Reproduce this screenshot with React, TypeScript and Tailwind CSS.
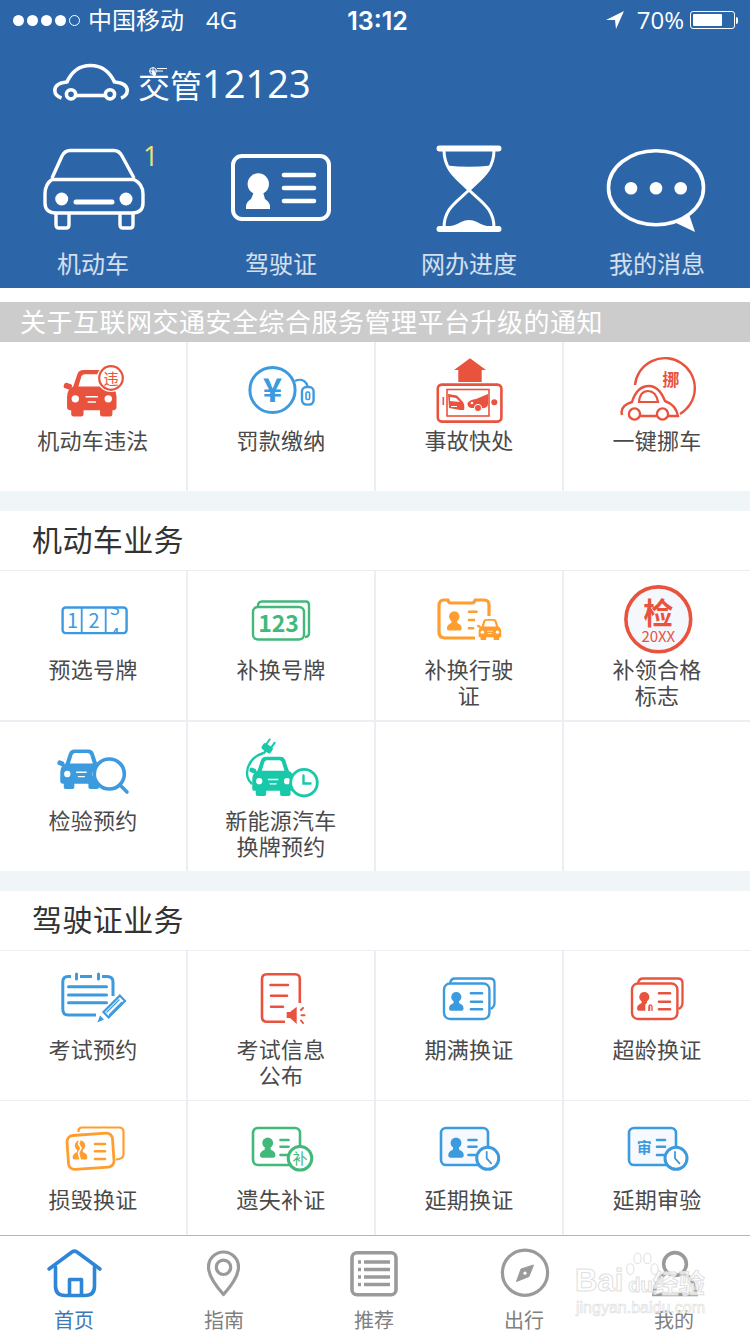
import React from "react";

const RED = "#e9533e";
const BLUE = "#3c9adf";
const GREEN = "#41b97a";
const ORANGE = "#ff9d2e";
const TEAL = "#18c9a9";
const GRAY = "#9a9a9a";

function Ic({ children }: { children: React.ReactNode }) {
  return (
    <svg viewBox="0 0 100 72" fill="none" className="w-[100px] h-[72px] block">
      {children}
    </svg>
  );
}

function CarFill({ x, y, s, c, sy }: { x: number; y: number; s: number; c: string; sy?: number }) {
  return (
    <g transform={`translate(${x} ${y}) scale(${s} ${sy ?? s})`}>
      <path fill={c} d="M8 17 L12 5 Q13.5 1 18 1 H34 Q38.5 1 40 5 L44 17 Q50 20 50 27 V37 Q50 40 47 40 H46 V44 Q46 46 44 46 H36 Q34 46 34 44 V40 H18 V44 Q18 46 16 46 H8 Q6 46 6 44 V40 H5 Q2 40 2 37 V27 Q2 20 8 17 Z" />
      <rect x="-1" y="14" width="8" height="5.5" rx="2.4" fill={c} transform="rotate(20 3 16)" />
      <path fill="#fff" d="M13 17 L16 7 Q17 5 19 5 H33 Q35 5 36 7 L39 17 Z" />
      <circle cx="10" cy="29" r="3.6" fill="#fff" />
      <circle cx="42" cy="29" r="3.6" fill="#fff" />
      <path stroke="#fff" strokeWidth="1.5" d="M20 27 H32 M22 32 H30" />
    </g>
  );
}

function Person({ x, y, s, c }: { x: number; y: number; s: number; c: string }) {
  return (
    <g transform={`translate(${x} ${y}) scale(${s})`} fill={c}>
      <circle cx="0" cy="0" r="5.2" />
      <path d="M-2.6 4 H2.6 L3 6.5 Q7.4 8 7.4 12 Q7.4 14 5.4 14 H-5.4 Q-7.4 14 -7.4 12 Q-7.4 8 -3 6.5 Z" />
    </g>
  );
}

function Lines({ x1, x2, ys, c, w = 2.6 }: { x1: number; x2: number; ys: number[]; c: string; w?: number }) {
  return (
    <g stroke={c} strokeWidth={w} strokeLinecap="round">
      {ys.map((y) => (
        <line key={y} x1={x1} x2={x2} y1={y} y2={y} />
      ))}
    </g>
  );
}

function Clock({ x, y, c }: { x: number; y: number; c: string }) {
  return (
    <g>
      <circle cx={x} cy={y} r="11" fill="#fff" stroke={c} strokeWidth="3" />
      <path d={`M${x - 1} ${y - 6.5} V${y} L${x + 3.5} ${y + 5}`} stroke={c} strokeWidth="1.8" strokeLinecap="round" />
    </g>
  );
}

const IconViolation = () => (
  <Ic>
    <CarFill x={22} y={13} s={1.03} c={RED} />
    <circle cx="68" cy="22" r="14" fill="#fff" />
    <circle cx="68" cy="22" r="11.8" fill="#fff" stroke={RED} strokeWidth="2.2" />
    <text x="68" y="27.5" textAnchor="middle" fontSize="15" fill={RED}>违</text>
  </Ic>
);

const IconFine = () => (
  <Ic>
    <circle cx="41.5" cy="34" r="22.6" stroke={BLUE} strokeWidth="3" />
    <text x="41.5" y="46" textAnchor="middle" fontSize="33" fontWeight="700" fill={BLUE}>¥</text>
    <path d="M64 25 Q69 22.5 73 25 Q76 27 76.5 30.5" stroke={BLUE} strokeWidth="2.2" />
    <rect x="71" y="31" width="11.6" height="17.6" rx="4.5" stroke={BLUE} strokeWidth="2.4" />
    <rect x="75" y="36" width="3.6" height="7.5" rx="1.4" stroke={BLUE} strokeWidth="1.6" />
  </Ic>
);

const IconAccident = () => (
  <Ic>
    <path fill={RED} d="M51 2.3 L35 14 H39.3 V26 H62.7 V14 H67 Z" />
    <rect x="18.8" y="28.6" width="63.6" height="37" rx="4" stroke={RED} strokeWidth="2.6" />
    <rect x="28" y="33.5" width="42" height="26.5" stroke={RED} strokeWidth="1.6" />
    <path d="M24.3 41 V49" stroke={RED} strokeWidth="1.6" />
    <circle cx="75.3" cy="46.3" r="3" fill={RED} />
    <path fill={RED} d="M29 38 L38 39.5 L44 46 Q46 49 45 54 L41 54 L30 52 Z" />
    <path fill="#fff" d="M31 41 L37 42 L41 46 L31 45 Z M32 50 H38 V51 H32 Z" />
    <path fill={RED} d="M48.5 47 Q51 43.5 57 43 L69 38 V48 Q69 51 65 52 H52 Q48 51 48.5 47 Z" />
    <circle cx="59" cy="52" r="3.6" fill={RED} stroke="#fff" strokeWidth="1" />
    <circle cx="53" cy="47" r="1.3" fill="#fff" />
  </Ic>
);

const IconMove = () => (
  <Ic>
    <path d="M28 29 A30 30 0 1 1 73 58" stroke={RED} strokeWidth="2.4" />
    <path d="M15 59 L14.5 56 Q15 49 25 46 Q30 30 42 30 Q52 30 58 45 Q69 49 71 60 H61 M49.5 60 H33.5" stroke={RED} strokeWidth="2.4" fill="#fff" />
    <circle cx="27.5" cy="58" r="5.6" fill="#fff" stroke={RED} strokeWidth="2.4" />
    <circle cx="55.5" cy="58" r="5.6" fill="#fff" stroke={RED} strokeWidth="2.4" />
    <path d="M32 46 Q33 35 41 35 Q49 35 51 46 Z" stroke={RED} strokeWidth="2.2" />
    <text x="64" y="30" textAnchor="middle" fontSize="17" fontWeight="700" fill={RED}>挪</text>
  </Ic>
);

const IconPlate = () => (
  <Ic>
    <defs>
      <clipPath id="pl"><rect x="62" y="23" width="21" height="25" /></clipPath>
    </defs>
    <rect x="19.6" y="22.5" width="64" height="25.6" rx="3" stroke={BLUE} strokeWidth="2.4" />
    <path d="M38.7 22 V48 M62.7 22 V48" stroke={BLUE} strokeWidth="1.8" />
    <text x="29.5" y="42.5" textAnchor="middle" fontSize="20" fill={BLUE}>1</text>
    <text x="51" y="42.5" textAnchor="middle" fontSize="20" fill={BLUE}>2</text>
    <g clipPath="url(#pl)">
      <text x="72" y="30" textAnchor="middle" fontSize="18" fill={BLUE}>3</text>
      <text x="72" y="56" textAnchor="middle" fontSize="18" fill={BLUE}>4</text>
    </g>
  </Ic>
);

const IconPlate2 = () => (
  <Ic>
    <path d="M27 21 Q27 16.5 31 16.5 H75 Q78 16.5 78 20 V48 Q78 52 74 52" stroke={GREEN} strokeWidth="2.4" />
    <rect x="22" y="22" width="51" height="32.5" rx="5" fill="#fff" stroke={GREEN} strokeWidth="2.4" />
    <text x="47.5" y="46.5" textAnchor="middle" fontSize="23" fontWeight="700" fill={GREEN}>123</text>
  </Ic>
);

const IconLicense = () => (
  <Ic>
    <path d="M58 53 H26 Q20 53 20 47 V21 Q20 15 25 15 H29 Q29.5 18 32 18 H53 Q55.5 18 56 15 H65 Q70 15 70 20 V36" stroke={ORANGE} strokeWidth="3.2" strokeLinejoin="round" />
    <Person x={35.3} y={31.5} s={1} c={ORANGE} />
    <Lines x1={50} x2={57.5} ys={[26.7, 35]} c={ORANGE} />
    <Lines x1={50} x2={54} ys={[43.3]} c={ORANGE} />
    <rect x="56" y="31" width="29" height="26" fill="#fff" />
    <CarFill x={58.7} y={33.5} s={0.47} c={ORANGE} />
  </Ic>
);

const IconSticker = () => (
  <Ic>
    <circle cx="51.3" cy="34.3" r="32.4" fill="#f4f8fc" stroke={RED} strokeWidth="3.6" />
    <text x="51.3" y="39" textAnchor="middle" fontSize="30" fontWeight="700" fill={RED}>检</text>
    <text x="51.3" y="57" textAnchor="middle" fontSize="15" fontWeight="400" fill={RED}>20XX</text>
  </Ic>
);

const IconInspect = () => (
  <Ic>
    <CarFill x={15.5} y={12.5} s={0.88} c={BLUE} />
    <circle cx="66.3" cy="38" r="15" fill="#fff" stroke={BLUE} strokeWidth="3.6" />
    <path d="M77 49 L84 56" stroke={BLUE} strokeWidth="3.6" strokeLinecap="round" />
  </Ic>
);

const IconEv = () => (
  <Ic>
    <path d="M32.5 17 C22 20 14 30 16.5 41 Q17.5 45 21 48" stroke={TEAL} strokeWidth="2.4" />
    <g transform="rotate(35 37 11)" fill={TEAL}>
      <rect x="31.5" y="9" width="11" height="7" rx="2.5" />
      <rect x="33" y="3" width="2" height="7" />
      <rect x="39" y="3" width="2" height="7" />
      <rect x="36" y="15" width="2.4" height="4" />
    </g>
    <CarFill x={19.5} y={20} s={0.87} c={TEAL} />
    <circle cx="73" cy="46.7" r="13.3" fill="#fff" stroke={TEAL} strokeWidth="2.8" />
    <path d="M72.5 39.5 V47.5 H79.5" stroke={TEAL} strokeWidth="2.4" strokeLinecap="round" />
  </Ic>
);

const IconExam = () => (
  <Ic>
    <path d="M28 11.5 H25 Q19.8 11.5 19.8 17 V44 Q19.8 50 25 50 H53 M37 11.5 H49 M59 11.5 H64 Q70 11.5 70 17 V31" stroke={BLUE} strokeWidth="3" />
    <path d="M33.5 9 V14 M55.5 9 V14" stroke={BLUE} strokeWidth="3" strokeLinecap="round" />
    <Lines x1={25.5} x2={63.5} ys={[21.7, 30, 37.7]} c={BLUE} w={3} />
    <path d="M60.5 47 L76.8 30.6 L82 36 L65.6 52.4 Z" fill="#fff" stroke={BLUE} strokeWidth="2.2" />
    <path d="M63.5 47.5 L76.5 34.5 M66 50 L79 37" stroke={BLUE} strokeWidth="1.2" />
    <path d="M54.5 57.5 L57 50.5 L61 54.5 Z" fill={BLUE} />
  </Ic>
);

const IconExamInfo = () => (
  <Ic>
    <path d="M68.8 38 V14 Q68.8 9.3 64 9.3 H36 Q31 9.3 31 14 V52 Q31 56.7 36 56.7 H54" stroke={RED} strokeWidth="2.6" />
    <path d="M39.5 20 H57 M40 30.7 H56 M40 41.7 H52" stroke={RED} strokeWidth="2.6" strokeLinecap="round" />
    <path d="M55.7 47 H59 L65.7 41.7 V59 L59 53 H55.7 Z" fill={RED} />
    <path d="M70 45 L72 43 M70.5 50.2 H73.5 M70 55.5 L72 58" stroke={RED} strokeWidth="2" strokeLinecap="round" />
  </Ic>
);

const DoubleCard = ({ c, arrow }: { c: string; arrow?: boolean }) => (
  <Ic>
    <path d="M31 18 Q32 13.5 36 13.5 H71 Q75.5 13.5 75.5 18 V38 Q75.5 42 71.5 44" stroke={c} strokeWidth="2.3" />
    <rect x="25" y="18.5" width="45.4" height="35.5" rx="6" fill="#fff" stroke={c} strokeWidth="2.4" />
    <Person x={37.3} y={32} s={0.98} c={c} />
    {arrow && <path d="M40 46 V41 Q40 39 42.5 39 Q45 39 45 42 V46" stroke="#fff" strokeWidth="3.4" />}
    {arrow && <path d="M42 46 V41.5 Q42 40 43.5 40 Q45 40 45 42 V46" stroke={c} strokeWidth="1.3" />}
    <Lines x1={52} x2={63} ys={[28.3, 36.7, 44.3]} c={c} />
  </Ic>
);

const IconDamaged = () => (
  <Ic>
    <path d="M35.5 17 V16 Q35.5 12.5 39 12.5 H76 Q80.5 12.5 80.5 17 V39 Q80.5 43 76 44 L73 44.5" stroke={ORANGE} strokeWidth="2.2" />
    <rect x="24.7" y="19.3" width="45.6" height="34" rx="6" fill="#fff" stroke={ORANGE} strokeWidth="2.8" transform="rotate(-4 47.5 36)" />
    <Person x={37} y={30.5} s={1} c={ORANGE} />
    <path d="M37.5 23 L35.5 29 L38 33 L35.5 38 L37.5 46" stroke="#fff" strokeWidth="1.6" />
    <Lines x1={52} x2={62} ys={[29, 36.3, 44]} c={ORANGE} />
  </Ic>
);

const IconLost = () => (
  <Ic>
    <rect x="22" y="13" width="47" height="37" rx="5" stroke={GREEN} strokeWidth="2.6" />
    <Person x={36.7} y={28} s={1.05} c={GREEN} />
    <Lines x1={49.5} x2={57.5} ys={[25, 31.7, 40]} c={GREEN} />
    <circle cx="69" cy="43.3" r="11.8" fill="#fff" stroke={GREEN} strokeWidth="3" />
    <text x="69" y="48.5" textAnchor="middle" fontSize="15" fill={GREEN}>补</text>
  </Ic>
);

const IconExtend = () => (
  <Ic>
    <rect x="22" y="13" width="47" height="37" rx="5" fill="#f6fafe" stroke={BLUE} strokeWidth="2.6" />
    <Person x={37} y={28} s={1.05} c={BLUE} />
    <Lines x1={49.5} x2={57.5} ys={[25, 31.7, 40]} c={BLUE} />
    <Clock x={68.7} y={43.3} c={BLUE} />
  </Ic>
);

const IconAudit = () => (
  <Ic>
    <rect x="22" y="13" width="47" height="37" rx="5" fill="#f6fafe" stroke={BLUE} strokeWidth="2.6" />
    <text x="37.3" y="38" textAnchor="middle" fontSize="15" fontWeight="700" fill={BLUE}>审</text>
    <Lines x1={50} x2={58} ys={[25, 31.7, 40]} c={BLUE} />
    <Clock x={69} y={43.3} c={BLUE} />
  </Ic>
);

type Item = { label: string; icon: React.ReactNode } | null;

const quick: Item[] = [
  { label: "机动车违法", icon: <IconViolation /> },
  { label: "罚款缴纳", icon: <IconFine /> },
  { label: "事故快处", icon: <IconAccident /> },
  { label: "一键挪车", icon: <IconMove /> },
];
const vehicle: Item[] = [
  { label: "预选号牌", icon: <IconPlate /> },
  { label: "补换号牌", icon: <IconPlate2 /> },
  { label: "补换行驶\n证", icon: <IconLicense /> },
  { label: "补领合格\n标志", icon: <IconSticker /> },
  { label: "检验预约", icon: <IconInspect /> },
  { label: "新能源汽车\n换牌预约", icon: <IconEv /> },
  null,
  null,
];
const driver: Item[] = [
  { label: "考试预约", icon: <IconExam /> },
  { label: "考试信息\n公布", icon: <IconExamInfo /> },
  { label: "期满换证", icon: <DoubleCard c={BLUE} /> },
  { label: "超龄换证", icon: <DoubleCard c={RED} arrow /> },
  { label: "损毁换证", icon: <IconDamaged /> },
  { label: "遗失补证", icon: <IconLost /> },
  { label: "延期换证", icon: <IconExtend /> },
  { label: "延期审验", icon: <IconAudit /> },
];

function Cell({ item }: { item: Item }) {
  return (
    <div className="h-[149px] bg-white flex flex-col items-center pt-[14px]">
      {item && item.icon}
      {item && (
        <div className="-mt-[2px] text-[22px] leading-[26px] tracking-[0.25px] text-[#4a4a4a] text-center whitespace-pre-line">{item.label}</div>
      )}
    </div>
  );
}

function Grid({ items, rowGap }: { items: Item[]; rowGap: string }) {
  return (
    <div className={`grid grid-cols-4 gap-x-[2px] bg-[#eceef3] ${rowGap}`}>
      {items.map((it, i) => (
        <Cell key={i} item={it} />
      ))}
    </div>
  );
}

function SectionTitle({ children }: { children: React.ReactNode }) {
  return (
    <div className="mt-[20px] h-[59px] bg-white pl-[32px] pb-[4px] flex items-center text-[30px] tracking-[0.4px] text-[#333333]">
      {children}
    </div>
  );
}

const BigCar = () => (
  <svg viewBox="0 0 120 90" fill="none" className="w-[120px] h-[90px]" stroke="#fff" strokeWidth="3.4">
    <path d="M19 34 L29 12 Q32 6.5 37 6.5 H81 Q86 6.5 89 12 L101 34" />
    <path d="M19 35.5 H101 Q110 40 110 50 V59 Q110 69 99 69 H23 Q12 69 12 59 V50 Q12 40 19 35.5 Z" />
    <path d="M23 70 V81 Q23 84 26 84 H33 Q36 84 36 81 V70 M87 70 V81 Q87 84 90 84 H97 Q100 84 100 81 V70" />
    <circle cx="28.7" cy="55" r="6.5" fill="#fff" stroke="none" />
    <circle cx="93" cy="55" r="6.5" fill="#fff" stroke="none" />
    <path d="M43 58 H79" strokeWidth="5" strokeLinecap="round" />
  </svg>
);

const BigCard = () => (
  <svg viewBox="0 0 120 90" fill="none" className="w-[120px] h-[90px]">
    <rect x="12" y="12" width="96" height="63" rx="9" stroke="#fff" strokeWidth="4" />
    <circle cx="37.3" cy="40" r="10.7" fill="#fff" />
    <path d="M33 48 H42 L44 55 Q49 58 49 63 V65 H25 V63 Q25 58 30 55 Z" fill="#fff" />
    <path d="M63 31 H93 M63 44 H93 M63 57 H93" stroke="#fff" strokeWidth="4.6" strokeLinecap="round" />
  </svg>
);

const BigGlass = () => (
  <svg viewBox="0 0 120 90" fill="none" className="w-[120px] h-[90px]">
    <path d="M30.5 4.5 H89.5 M30.5 85 H89.5" stroke="#fff" strokeWidth="6" strokeLinecap="round" />
    <path d="M35 6 C35 26 48 34 60 46 C72 34 85 26 85 6 M35 84 C35 64 48 58 60 46 C72 58 85 64 85 84" stroke="#fff" strokeWidth="3" />
    <path d="M38 21.5 Q60 24 82 21.5 C78 32 68 38 60 46 C52 38 42 32 38 21.5 Z" fill="#fff" />
    <path d="M36 83 Q46 82 52 78 Q60 74 68 78 Q74 82 84 83 Z" fill="#fff" />
  </svg>
);

const BigBubble = () => (
  <svg viewBox="0 0 120 90" fill="none" className="w-[120px] h-[90px]">
    <ellipse cx="59" cy="43.7" rx="47.5" ry="37" stroke="#fff" strokeWidth="3.6" />
    <path d="M77 78 L98 88 L92 70 Z" fill="#fff" />
    <circle cx="34" cy="44.3" r="6.3" fill="#fff" />
    <circle cx="59" cy="44.3" r="6.3" fill="#fff" />
    <circle cx="83.7" cy="44.3" r="6.3" fill="#fff" />
  </svg>
);

const navIcons = [
  <svg key="h" viewBox="0 0 60 50" fill="none" className="w-[60px] h-[50px]" stroke="#2f86d6" strokeWidth="3.6" strokeLinecap="round" strokeLinejoin="round">
    <path d="M4 21 L27 4 Q29.5 2.4 32 4 L55 21" />
    <path d="M10.5 19 V38 Q10.5 47.5 20 47.5 H40 Q49.5 47.5 49.5 38 V19" />
    <path d="M24.5 47 V31.5 H36.5 V47" />
  </svg>,
  <svg key="p" viewBox="0 0 60 50" fill="none" className="w-[60px] h-[50px] -translate-x-[1px]" stroke={GRAY} strokeWidth="3.2">
    <path d="M29.5 46.5 C21 37 14.5 28 14.5 19 A15 15 0 0 1 44.5 19 C44.5 28 38 37 29.5 46.5 Z" strokeLinejoin="round" />
    <circle cx="29.5" cy="19.3" r="7.2" />
  </svg>,
  <svg key="l" viewBox="0 0 60 50" fill="none" className="w-[60px] h-[50px] -translate-x-[1px]" stroke={GRAY} strokeWidth="3.6">
    <rect x="8" y="4.7" width="44" height="42" rx="5" />
    <path d="M20 14 H46 M20 21.5 H46 M20 29 H46 M20 36.5 H46" strokeWidth="3.4" />
    <path d="M14 14 H17 M14 21.5 H17 M14 29 H17 M14 36.5 H17" strokeWidth="3.4" />
  </svg>,
  <svg key="c" viewBox="0 0 60 50" fill="none" className="w-[60px] h-[50px]" stroke={GRAY}>
    <circle cx="30" cy="24.7" r="22.6" strokeWidth="3.2" />
    <path d="M38.5 17 L34 28.5 L21.5 33.5 L26 21 Z" fill={GRAY} strokeWidth="1" strokeLinejoin="round" />
    <circle cx="30" cy="25.2" r="1.6" fill="#fff" stroke="none" />
  </svg>,
  <svg key="m" viewBox="0 0 60 50" fill="none" className="w-[60px] h-[50px]" stroke={GRAY} strokeWidth="3.6">
    <circle cx="30" cy="16" r="11.4" />
    <path d="M21 25 Q10 32 9 46.5 H51 Q50 32 39 25" />
  </svg>,
];

const navLabels = ["首页", "指南", "推荐", "出行", "我的"];

export default function App() {
  const head = [
    { label: "机动车", icon: <BigCar />, badge: true },
    { label: "驾驶证", icon: <BigCard /> },
    { label: "网办进度", icon: <BigGlass /> },
    { label: "我的消息", icon: <BigBubble /> },
  ];
  return (
    <div className="relative w-[750px] h-[1334px] overflow-hidden bg-white font-['Noto_Sans_CJK_SC','Noto_Sans',sans-serif] flex flex-col">
      <header className="h-[288px] shrink-0 bg-[#2c66a9] text-white">
        <div className="h-[40px] flex items-center pl-[13px] pr-[12px] text-[24px] leading-none font-['Open_Sans','Noto_Sans_CJK_SC',sans-serif]">
          <div className="flex-1 flex items-center">
            <div className="flex gap-[3px]">
              {[0, 1, 2, 3].map((i) => (
                <span key={i} className="w-[11px] h-[11px] rounded-full bg-white" />
              ))}
              <span className="w-[11px] h-[11px] rounded-full border border-white" />
            </div>
            <span className="ml-[8px]">中国移动</span>
            <span className="ml-[22px]">4G</span>
          </div>
          <span className="text-[25px] font-semibold font-['Inter',sans-serif] translate-x-[2px] translate-y-[1px]">13:12</span>
          <div className="flex-1 flex items-center justify-end">
            <svg viewBox="0 0 18 18" className="w-[18px] h-[18px]" fill="#fff">
              <path d="M18 0 L0 9 H9 L10 18 Z" />
            </svg>
            <span className="ml-[13px]">70%</span>
            <div className="ml-[6px] w-[45px] h-[18px] rounded-[3px] border border-white p-[2px] flex">
              <div className="w-[29px] bg-white rounded-[1px]" />
            </div>
            <div className="ml-[1px] w-[2px] h-[7px] bg-white rounded-r-sm" />
          </div>
        </div>
        <div className="h-[104px] pl-[52px] pt-[23px] flex items-start">
          <svg viewBox="0 0 80 40" fill="none" className="w-[80px] h-[40px]" stroke="#fff" strokeWidth="3.6">
            <path d="M14.5 20 Q22 2.5 38.5 2.5 Q55 2.5 63 20" />
            <path d="M15 19 Q3 20 2.8 27.5 Q3 33 9.5 35" />
            <path d="M62.5 19 Q75 20 75.3 27.5 Q75 33 69 35" />
            <path d="M24 32.5 H53" />
            <circle cx="19" cy="31.3" r="4.6" />
            <circle cx="58" cy="31.3" r="4.6" />
          </svg>
          <div className="relative ml-[6px] -mt-[3px] flex items-baseline font-normal leading-[46px]">
            <span className="text-[32px]">交管</span>
            <span className="text-[38px] font-['Open_Sans',sans-serif] ml-[0px]">12123</span>
            <svg viewBox="0 0 30 12" fill="none" className="absolute left-0 top-[6px] w-[30px] h-[12px]" stroke="#fff" strokeWidth="1">
              <circle cx="15" cy="5" r="3.4" />
              <path d="M15 1.6 V8.4 M11.6 5 H18.4 M19 2.5 H29 M19 5 H25" />
            </svg>
          </div>
        </div>
        <div className="grid grid-cols-4 gap-x-[2px]">
          {head.map((h) => (
            <div key={h.label} className="relative flex flex-col items-center">
              {h.icon}
              <span className="mt-[13px] text-[24px] leading-[32px] text-white/80">{h.label}</span>
              {h.badge && (
                <span className="absolute left-[143px] top-[-6px] text-[27px] leading-[36px] text-[#e6e27a] font-['Open_Sans',sans-serif]">1</span>
              )}
            </div>
          ))}
        </div>
      </header>

      <div className="h-[14px] shrink-0 bg-white" />
      <div className="h-[40px] shrink-0 bg-[#cccccc] pl-[20px] pb-[4px] flex items-center text-[26px] tracking-[0.5px] text-white whitespace-nowrap">
        关于互联网交通安全综合服务管理平台升级的通知
      </div>

      <main className="flex-1 min-h-0 overflow-hidden bg-[#f0f5f8]">
        <Grid items={quick} rowGap="gap-y-0" />
        <SectionTitle>机动车业务</SectionTitle>
        <div className="pt-[1px] bg-[#eceef3]">
          <Grid items={vehicle} rowGap="gap-y-[2px]" />
        </div>
        <SectionTitle>驾驶证业务</SectionTitle>
        <div className="pt-[1px] bg-[#eceef3]">
          <Grid items={driver} rowGap="gap-y-[1px]" />
        </div>
      </main>

      <nav className="h-[99px] shrink-0 bg-white border-t border-[#b5b5b5] flex">
        {navLabels.map((l, i) => (
          <div key={l} className="w-[150px] flex flex-col items-center pt-[12px]">
            {navIcons[i]}
            <span className={`mt-[8px] text-[20px] leading-[28px] -translate-x-[1px] ${i === 0 ? "text-[#3f78b5]" : "text-[#808080]"}`}>{l}</span>
          </div>
        ))}
      </nav>

      <div className="absolute left-[575px] top-[1254px] w-[135px] pointer-events-none font-['Liberation_Sans',sans-serif]">
        <div className="flex items-end h-[44px] text-[31px] leading-[34px] font-bold text-white/75 [-webkit-text-stroke:1px_#e0e0e0]">
          <span>Bai</span>
          <span className="relative text-[20px] leading-[26px] ml-[5px]">
            du
            <svg viewBox="0 0 40 44" className="absolute left-[-4px] top-[-24px] w-[36px] h-[46px]" fill="none" stroke="#e0e0e0" strokeWidth="1.2">
              <ellipse cx="7" cy="20" rx="4" ry="6" />
              <ellipse cx="15" cy="8" rx="4" ry="6" />
              <ellipse cx="26" cy="8" rx="4" ry="6" />
              <ellipse cx="34" cy="20" rx="4" ry="6" />
            </svg>
          </span>
          <span className="text-[26px] leading-[32px] font-['Noto_Sans_CJK_SC',sans-serif]">经验</span>
        </div>
        <div className="mt-[-1px] ml-[1px] text-[16px] leading-[22px] whitespace-nowrap text-white/70 [-webkit-text-stroke:0.6px_#dcdcdc]">
          jingyan.baidu.com
        </div>
      </div>
    </div>
  );
}
